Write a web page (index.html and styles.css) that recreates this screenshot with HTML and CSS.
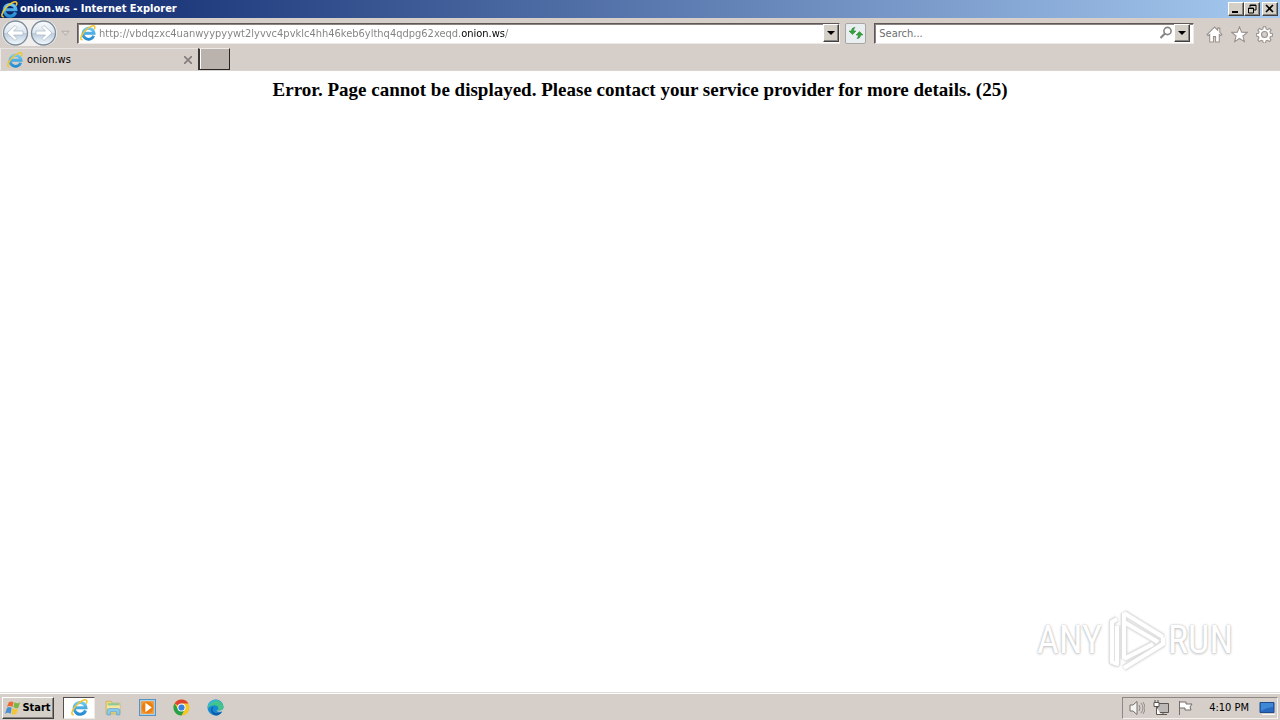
FILE: index.html
```html
<!DOCTYPE html>
<html lang="en">
<head>
<meta charset="utf-8">
<title>onion.ws - Internet Explorer</title>
<link rel="stylesheet" href="styles.css">
</head>
<body>
<svg class="defs" aria-hidden="true">
  <defs>
    <linearGradient id="disc" x1="0" y1="0" x2="0" y2="1"><stop offset="0" stop-color="#fafcfe"/><stop offset=".48" stop-color="#dce6ef"/><stop offset=".52" stop-color="#bccddd"/><stop offset="1" stop-color="#f4faff"/></linearGradient>
    <linearGradient id="blue" x1="0" y1="0" x2="0" y2="1"><stop offset="0" stop-color="#6cc9f4"/><stop offset="1" stop-color="#258bd0"/></linearGradient>
    <symbol id="ie" viewBox="0 0 16 16">
      <path d="M13.700 10.700a5.500 5.500 0 1 1 .3-2.500H4" fill="none" stroke="url(#blue)" stroke-width="2.900"/>
      <path d="M2.600 14.800C-.2 15.300.4 11.300 4.200 6.800 8.500 2 13.400-.2 14.600 1.300c.6.900.2 2-.5 3.100" fill="none" stroke="#f1c62f" stroke-width="1.500"/>
    </symbol>
  </defs>
</svg>
<div class="window">
  <header class="titlebar">
    <svg class="icon18"><use href="#ie"/></svg>
    <h1 class="title">onion.ws - Internet Explorer</h1>
    <div class="captions">
      <button class="bevel caption" aria-label="Minimize"><svg viewBox="0 0 12 10"><path d="M2 8h6" stroke="#000" stroke-width="2"/></svg></button>
      <button class="bevel caption" aria-label="Restore"><svg viewBox="0 0 12 10"><path d="M4 3V1h6v5H8M4 1.500h6M2 4.500h6M2.500 4v5h5V4z" fill="none" stroke="#000"/></svg></button>
      <button class="bevel caption close" aria-label="Close"><svg viewBox="0 0 12 10"><path d="m2 1 7 7m0-7L2 8" stroke="#000" stroke-width="1.600"/></svg></button>
    </div>
  </header>
  <div class="navbar">
    <div class="history">
      <button class="plain" aria-label="Back"><svg viewBox="0 0 27 26"><circle cx="13.500" cy="13" r="12" fill="url(#disc)" stroke="#7f8c9b" stroke-width="1.300"/><path d="m5 13 8-7.500 2 2L11.500 11H21v4h-9.500l3.500 3.500-2 2z" fill="#fff" stroke="#a6b4c3" stroke-width=".7"/></svg></button>
      <button class="plain" aria-label="Forward"><svg viewBox="0 0 27 26"><circle cx="13.500" cy="13" r="12" fill="url(#disc)" stroke="#7f8c9b" stroke-width="1.300"/><path d="m22 13-8-7.500-2 2 3.500 3.500H6v4h9.500L12 18.500l2 2z" fill="#fff" stroke="#a6b4c3" stroke-width=".7"/></svg></button>
    </div>
    <button class="plain recent" aria-label="Recent pages"><svg viewBox="0 0 10 7"><path d="M1 1h8L5 5.500z" fill="#ddd8d4" stroke="#aea7a3"/></svg></button>
    <div class="field address">
      <svg class="icon16"><use href="#ie"/></svg>
      <input class="url" type="text" aria-label="Address" spellcheck="false" value="http://vbdqzxc4uanwyypyywt2lyvvc4pvklc4hh46keb6ylthq4qdpg62xeqd.onion.ws/">
      <button class="bevel drop" aria-label="Show address list"><svg viewBox="0 0 8 4"><path d="M0 0h8L4 4z"/></svg></button>
    </div>
    <button class="refresh" aria-label="Refresh"><svg viewBox="0 0 16 14"><path d="M7 1.500C4.500 1.500 3.500 3 3.500 5H1l3.500 3.500L8 5H5.700C5.700 3.500 6 2.500 7 1.500zM9 12.500c2.500 0 3.500-1.500 3.500-3.500H15l-3.500-3.500L8 9h2.300c0 1.500-.3 2.500-1.300 3.500z" fill="#35a339" stroke="#1f7c2b" stroke-width=".5"/></svg></button>
    <div class="field search">
      <input type="text" aria-label="Search" placeholder="Search...">
      <button class="plain find" aria-label="Search"><svg viewBox="0 0 14 14"><circle cx="8.500" cy="5" r="3.600" fill="none" stroke="#858585" stroke-width="1.600"/><path d="M6 7.500 1.500 12" stroke="#858585" stroke-width="2.200"/></svg></button>
      <button class="bevel drop" aria-label="Search options"><svg viewBox="0 0 8 4"><path d="M0 0h8L4 4z"/></svg></button>
    </div>
    <nav class="tools" aria-label="Tools">
      <button class="plain" aria-label="Home"><svg viewBox="0 0 16 16"><path d="M8 1 1 8l1 1 1.500-1v7h3.500v-5h2v5h3.500V8L14 9l1-1-2-2V2h-2v2z" fill="#fff" stroke="#99918d"/></svg></button>
      <button class="plain" aria-label="Favorites"><svg viewBox="0 0 16 16"><path d="m8 .8 2 5 5.300.2-4.100 3.400 1.400 5.300L8 11.700l-4.600 3 1.400-5.300L.7 6 6 5.800z" fill="#fff" stroke="#99918d"/></svg></button>
      <button class="plain" aria-label="Settings"><svg viewBox="0 0 16 16"><path d="M6.900.7h2.200l.4 2 1.500.7 1.700-1.200 1.500 1.600-1.100 1.700.6 1.400 1.900.4v2.200l-2 .4-.6 1.400 1.100 1.800-1.500 1.500-1.800-1.100-1.400.6-.4 2H6.800l-.4-2-1.400-.6-1.800 1.100-1.500-1.500 1.100-1.800-.6-1.400-1.900-.4V7.300l2-.4.6-1.400-1.100-1.700 1.500-1.600L5 3.400l1.500-.7zM8 5.200A2.800 2.800 0 1 0 8 10.800 2.800 2.800 0 0 0 8 5.200z" fill="#fff" fill-rule="evenodd" stroke="#99918d"/></svg></button>
    </nav>
  </div>
  <div class="tabs">
    <div class="tab">
      <svg class="icon16"><use href="#ie"/></svg>
      <span class="tabname">onion.ws</span>
      <button class="plain tabclose" aria-label="Close tab"><svg viewBox="0 0 8 8"><path d="m0 0 8 8m0-8L0 8" stroke="#857e7a" stroke-width="1.700"/></svg></button>
    </div>
    <button class="newtab" aria-label="New tab"></button>
  </div>
  <main class="page">
    <h2 class="message">Error. Page cannot be displayed. Please contact your service provider for more details. (25)</h2>
    <div class="watermark">
      <span>ANY</span>
      <svg viewBox="0 0 60 64"><g fill="none" stroke-linejoin="round"><path d="M12 11 7 14v40l5 2V18M19 5v46M19 5l39 24M19 14l34 20M19 51l29-15M19 60l39-24v-7" stroke="#e0e0e0" stroke-width="6"/><path d="M12 11 7 14v40l5 2V18M19 5v46M19 5l39 24M19 14l34 20M19 51l29-15M19 60l39-24v-7" stroke="#fff" stroke-width="4"/></g></svg>
      <span>RUN</span>
    </div>
  </main>
  <footer class="taskbar">
    <button class="bevel start"><svg viewBox="0 0 18 16"><path d="M4 2q3-2 5 0L8 7Q5 5 2 7z" fill="#ed6a32"/><path d="M10 2q3 2 6 0l-2 6q-3 1-5-1z" fill="#7db642"/><path d="M2 8q3-2 5 0l-1 6q-3-2-6 0z" fill="#4a91d0"/><path d="M8 8q3 2 6 1l-2 5q-3 2-5 0z" fill="#f4c53a"/></svg>Start</button>
    <div class="apps">
      <button class="app active" aria-label="Internet Explorer"><svg viewBox="0 0 16 16"><use href="#ie"/></svg></button>
      <button class="app" aria-label="File Explorer"><svg viewBox="0 0 16 16"><path d="M1 2h5l1 2h7v10H1z" fill="#edd778" stroke="#c6ae58" stroke-width=".7"/><path d="M3 4h10v4H3z" fill="#8bcb9a"/><path d="M2 6h12v4H2z" fill="#f6e6a0"/><path d="M2 15v-4q0-2 2-2h8q2 0 2 2v4h-3v-3H5v3z" fill="#8bc9ed" stroke="#55a0cb" stroke-width=".6"/></svg></button>
      <button class="app" aria-label="Media Player"><svg viewBox="0 0 16 16"><path d="M.5.500h15v15H.5z" fill="#a8d4f3" stroke="#5b91bd"/><path d="M2 2h12v12H2z" fill="#f39a35"/><circle cx="8" cy="8" r="5.500" fill="#f07e0c"/><path d="m6 3.500 6 4.500-6 4.500z" fill="#fff"/></svg></button>
      <button class="app" aria-label="Chrome"><svg viewBox="0 0 16 16"><circle cx="8" cy="8" r="7.500" fill="#f6c722"/><path d="M8 8 1.500 4.200A7.500 7.500 0 0 1 14.500 4.200H8z" fill="#df4334"/><path d="M1.500 4.200A7.500 7.500 0 0 0 8 15.500L11 9.800 5 9.800z" fill="#29a04b"/><circle cx="8" cy="8" r="3.800" fill="#fff"/><circle cx="8" cy="8" r="2.900" fill="#397fe4"/></svg></button>
      <button class="app" aria-label="Edge"><svg viewBox="0 0 16 16"><path d="M15.500 8C15.500 3.500 12 .5 8 .5S.5 4 .5 8s3.500 7.500 7.500 7.500c3 0 5.300-1.500 6.500-4-2 1-5 .5-5.500-1 3 1 6.500 0 6.500-2.500z" fill="#1789d2"/><path d="M1 6C3-.500 13-1.500 15.500 7c.2 3-3 4.500-5.500 3.500 2-3-1-5-4-4.500-2 0-4 1-5 3z" fill="#43c48b"/><path d="M1 6C3 1 8-1 12 2 8 1 5 3 3 6z" fill="#35b8d8"/><path d="M6 7c-3 5 2 8 8 5-2 3.500-5 4-7 3-4-2-4-7-1-8z" fill="#125aa4"/></svg></button>
    </div>
    <div class="tray">
      <svg class="icon16" viewBox="0 0 16 16"><path d="M1 5h3l4-3.500v13L4 11H1z" fill="#f7f5f3" stroke="#77716e"/><path d="M10 5q2 3 0 6m2-8q4 5 0 10m2-11q4 6 0 12" fill="none" stroke="#918a86"/></svg>
      <svg class="icon16" viewBox="0 0 16 16"><path d="M4.500 3.500h11v9h-11zM6 14.500h8M10 12v3" fill="#bcb8b5" stroke="#5b5653"/><path d="M1 2.500h5v4H1zM2 0v3m3-3v3M3.500 7v7.500H8" fill="#fff" stroke="#5b5653"/></svg>
      <svg class="icon16" viewBox="0 0 16 16"><path d="M2.500 1v14M3 2h6v2h6l-2 3 1 3H8V8H3" fill="#fff" stroke="#746e6a"/></svg>
      <time class="clock">4:10 PM</time>
      <svg class="icon16" viewBox="0 0 16 16"><path d="M1 2.500h14v10H1z" fill="#2869bd" stroke="#1d4c91"/><path d="M2 3h12v4q-6 0-12 4z" fill="#3e88d5"/><path d="M3 14.500h13" stroke="#f7f7f7"/></svg>
    </div>
  </footer>
</div>
</body>
</html>
```
FILE: styles.css
```css
* { box-sizing: border-box; }
body {
  margin: 0;
  background: #fff;
  color: #000;
  font: 11px/14px Tahoma, "DejaVu Sans Condensed", "DejaVu Sans", sans-serif;
}
button, input { font: inherit; color: inherit; }
svg { display: block; flex: none; }
button { flex: none; padding: 0; }
.defs { position: absolute; width: 0; height: 0; }
.window { display: flex; flex-direction: column; min-height: 100vh; }
.icon16 { width: 16px; height: 16px; }
.icon18 { width: 17px; height: 17px; }
.plain { border: 0; background: none; }
.bevel {
  display: flex;
  align-items: center;
  justify-content: center;
  background: #d4d0c8;
  border: 1px solid;
  border-color: #fff #404040 #404040 #fff;
  box-shadow: inset -1px -1px #8b8581;
}

.titlebar {
  display: flex;
  align-items: center;
  height: 18px;
  padding: 0 2px 0 1px;
  gap: 2px;
  background: linear-gradient(to right, #0a246a, #a6caf0);
}
.title { flex: 1; margin: 0; color: #fff; font-size: 11px; line-height: 14px; }
.captions { display: flex; }
.caption { width: 16px; height: 14px; }
.caption svg { width: 12px; height: 10px; }
.close { margin-left: 2px; }

.navbar {
  display: flex;
  align-items: center;
  height: 30px;
  padding: 0 7px 0 2px;
  background: #d5cec9;
}
.history {
  display: flex;
  gap: 1px;
  border-radius: 13px;
  background: #f1efed;
}
.history svg { width: 27px; height: 26px; }
.recent { margin: 0 7px 0 4px; }
.recent svg { width: 9px; height: 7px; }
.field {
  display: flex;
  align-items: center;
  height: 21px;
  min-width: 0;
  background: #fff;
  border: 1px solid;
  border-color: #5f5856 #eeeae7 #eeeae7 #5f5856;
  box-shadow: inset 1px 1px #8a8481;
}
.field input {
  flex: 1;
  min-width: 0;
  height: 18px;
  padding: 0;
  border: 0;
  outline: 0;
  background: transparent;
}
.address { flex: 765; padding-left: 2px; gap: 3px; }
.field .url {
  color: transparent;
  background: linear-gradient(to right, #808080 362px, #000 362px, #000 406px, #808080 406px);
  background-clip: text;
  -webkit-background-clip: text;
}
.drop { width: 16px; height: 18px; }
.drop svg { width: 8px; height: 4px; }
.refresh {
  display: flex;
  align-items: center;
  justify-content: center;
  width: 21px;
  height: 21px;
  margin: 0 8px 0 5px;
  border: 1px solid #aaa6a5;
  border-radius: 2px;
  background: #e9eef1;
}
.refresh svg { width: 16px; height: 14px; }
.search { flex: 313; padding: 0 3px 0 4px; }
.search input::placeholder { color: #6d6d6d; opacity: 1; }
.find { margin-right: 1px; }
.find svg { width: 14px; height: 14px; }
.tools { display: flex; gap: 8px; margin-left: 12px; padding-top: 3px; }
.tools svg { width: 17px; height: 17px; }

.tabs {
  display: flex;
  align-items: flex-start;
  height: 23px;
  background: #d5cec9;
  border-bottom: 1px solid #d9d4cf;
}
.tab {
  display: flex;
  align-items: center;
  width: 198px;
  height: 22px;
  padding: 1px 6px 0;
  gap: 4px;
  border-top: 1px solid #e8e4e1;
  border-left: 1px solid #eeeae7;
}
.tabname { flex: 1; }
.tabclose svg { width: 8px; height: 8px; }
.newtab {
  width: 32px;
  height: 22px;
  background: #bab2ad;
  border: 1px solid;
  border-color: #eeeae7 #292522 #292522;
  border-left: 2px solid #393532;
  box-shadow: inset 1px 0 #fff;
}

.page {
  display: flex;
  flex: 1;
  flex-direction: column;
  align-items: center;
  justify-content: space-between;
  padding: 9px 12px 20px;
}
.message {
  margin: 0;
  font: bold 19px/20px "Liberation Serif", serif;
  text-align: center;
}
.watermark {
  display: flex;
  align-items: center;
  align-self: flex-end;
  gap: 3px;
  margin-right: 35px;
  color: #fff;
  font: 38px/44px "Roboto Condensed", "Open Sans Condensed", "Liberation Sans Narrow", sans-serif;
  text-shadow: 0 0 2px #b5b5b5, 0 1px 3px #c8c8c8;
}
.watermark svg { width: 60px; height: 64px; filter: drop-shadow(0 0 1px #d0d0d0); }

.taskbar {
  display: flex;
  align-items: center;
  height: 28px;
  padding: 2px 2px 0;
  background: #d5cec9;
  border-top: 1px solid #dedad7;
  box-shadow: inset 0 1px #fff;
}
.start { width: 52px; height: 22px; font-size: 11px; font-weight: bold; }
.start svg { width: 17px; height: 16px; }
.apps { display: flex; flex: 1; gap: 2px; margin-left: 9px; }
.app {
  display: flex;
  align-items: center;
  justify-content: center;
  width: 32px;
  height: 22px;
  border: 1px solid transparent;
  background: none;
}
.app svg { width: 17px; height: 17px; }
.active { background: #fff; border-color: #55504d #eeeae7 #eeeae7 #55504d; }
.tray {
  display: flex;
  align-items: center;
  height: 22px;
  padding: 0 2px 0 6px;
  gap: 8px;
  border: 1px solid;
  border-color: #8e8783 #f4f1ef #f4f1ef #8e8783;
}
.clock { margin: 0 2px 0 8px; white-space: nowrap; }
```
